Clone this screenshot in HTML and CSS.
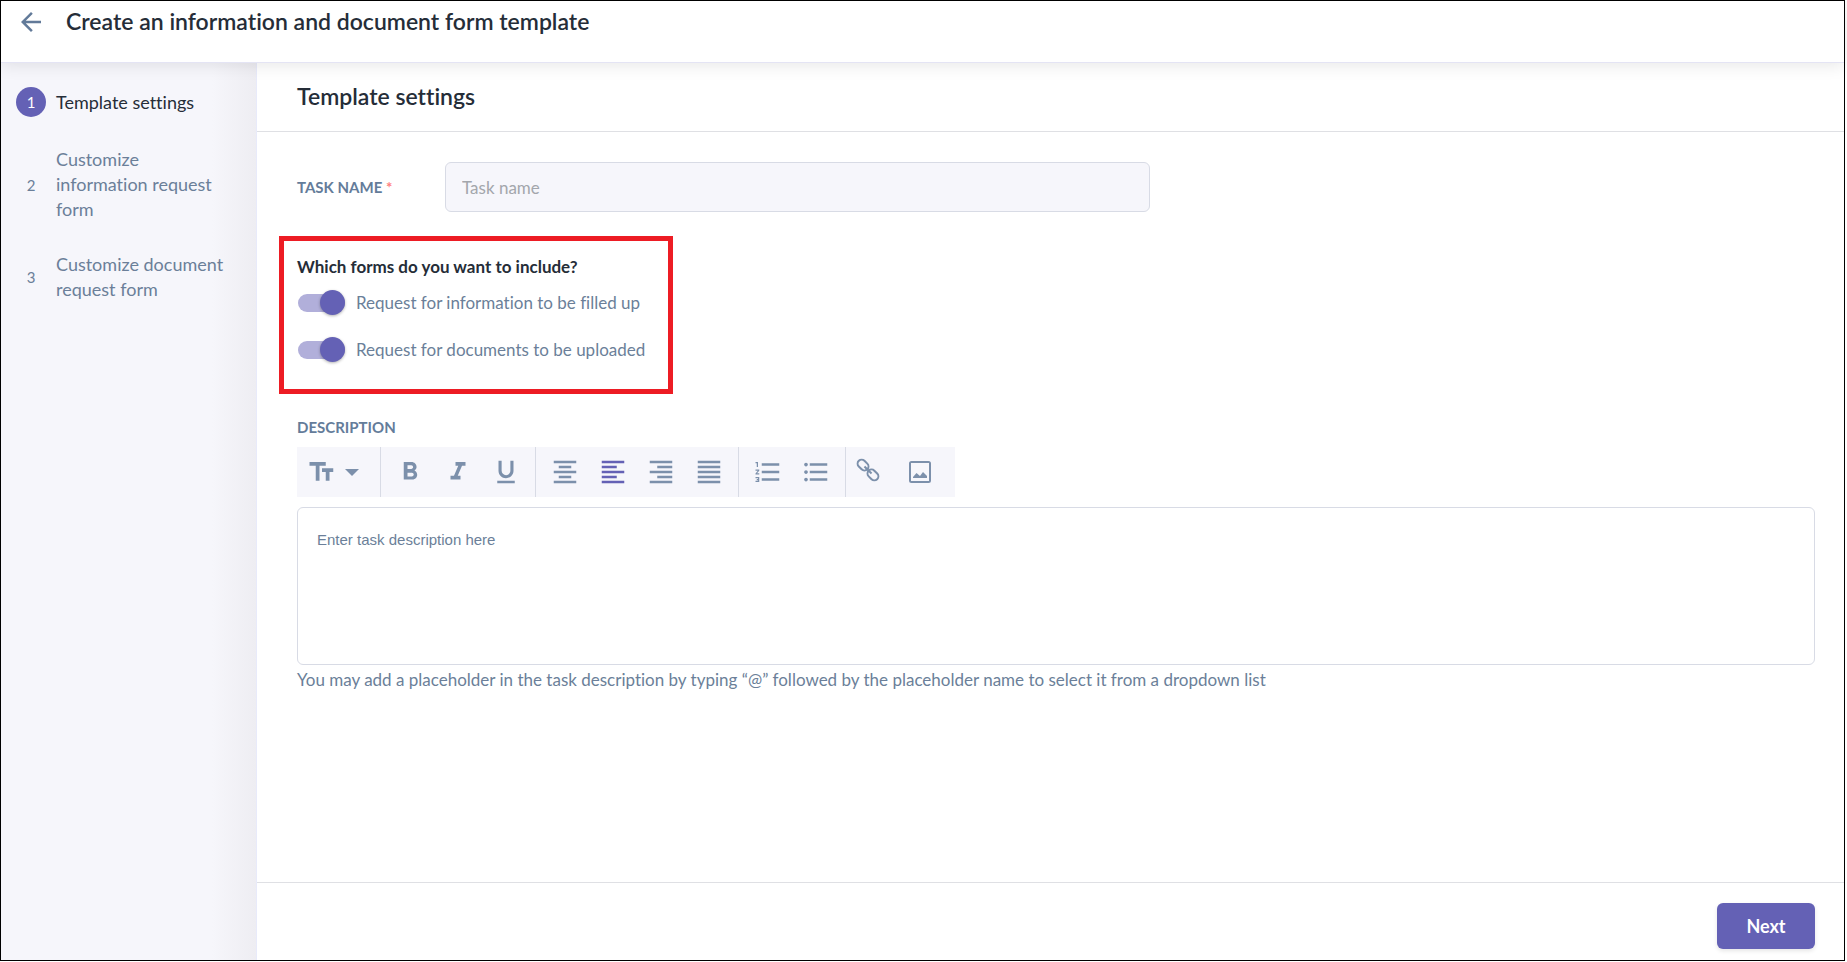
FILE: index.html
```html
<!doctype html>
<html lang="en">
    <head>
        <meta charset="utf-8">
        <title>Create an information and document form template</title>
        <link rel="stylesheet" href="styles.css">
    </head>

    <body>
        <div class="app">
            <header class="topbar">
                <button type="button" class="back" aria-label="Back">
                    <svg viewBox="0 0 24 24"><path d="M20 11H7.83l5.59-5.59L12 4l-8 8 8 8 1.41-1.41L7.83 13H20v-2z"/></svg>
                </button>
                <h1>Create an information and document form template</h1>
            </header>
            <div class="layout">
                <nav class="steps">
                    <ol>
                        <li class="step active"><span class="num">1</span><span>Template settings</span></li>
                        <li class="step"><span class="num">2</span><span>Customize information request form</span></li>
                        <li class="step"><span class="num">3</span><span>Customize document request form</span></li>
                    </ol>
                </nav>
                <main class="panel">
                    <h2>Template settings</h2>
                    <form class="settings" id="settings_form">
                        <div class="field">
                            <label class="caption" for="task_name">TASK NAME <span class="required">*</span></label>
                            <input type="text" id="task_name" name="task_name" placeholder="Task name" required>
                        </div>
                        <fieldset class="forms">
                            <h3>Which forms do you want to include?</h3>
                            <label for="request_info">
                                <input type="checkbox" class="switch" id="request_info" name="request_info" checked>
                                Request for information to be filled up
                            </label>
                            <label for="request_docs">
                                <input type="checkbox" class="switch" id="request_docs" name="request_docs" checked>
                                Request for documents to be uploaded
                            </label>
                        </fieldset>
                        <div class="description">
                            <label class="caption" for="description">DESCRIPTION</label>
                            <div class="toolbar">
                                <div class="group">
                                    <button type="button" class="size" aria-label="Text size">
                                        <svg viewBox="0 0 24 24"><path d="M2 4v3h5v12h3V7h5V4H2zm19 5h-9v3h3v7h3v-7h3V9z"/></svg>
                                        <svg class="caret" viewBox="0 0 14 7"><path d="M0 0l7 7 7-7z"/></svg>
                                    </button>
                                </div>
                                <div class="group">
                                    <button type="button" aria-label="Bold">
                                        <svg viewBox="0 0 24 24"><path d="M15.6 10.79c.97-.67 1.65-1.77 1.65-2.79 0-2.26-1.75-4-4-4H7v14h7.04c2.09 0 3.71-1.7 3.71-3.79 0-1.52-.86-2.82-2.15-3.42zM10 6.5h3c.83 0 1.5.67 1.5 1.5s-.67 1.5-1.5 1.5h-3v-3zm3.5 9H10v-3h3.5c.83 0 1.5.67 1.5 1.5s-.67 1.5-1.5 1.5z"/></svg>
                                    </button>
                                    <button type="button" aria-label="Italic">
                                        <svg viewBox="0 0 24 24"><path d="M10 4v3h2.21l-3.42 8H6v3h8v-3h-2.21l3.42-8H18V4z"/></svg>
                                    </button>
                                    <button type="button" aria-label="Underline">
                                        <svg viewBox="0 0 24 24"><path d="M12 17c3.31 0 6-2.69 6-6V3h-2.5v8c0 1.93-1.57 3.5-3.5 3.5S8.5 12.93 8.5 11V3H6v8c0 3.31 2.69 6 6 6zm-7 2v2h14v-2H5z"/></svg>
                                    </button>
                                </div>
                                <div class="group">
                                    <button type="button" aria-label="Align center">
                                        <svg viewBox="0 0 24 24"><path d="M7 15v2h10v-2H7zm-4 6h18v-2H3v2zm0-8h18v-2H3v2zm4-6v2h10V7H7zM3 3v2h18V3H3z"/></svg>
                                    </button>
                                    <button type="button" class="on" aria-label="Align left">
                                        <svg viewBox="0 0 24 24"><path d="M15 15H3v2h12v-2zm0-8H3v2h12V7zM3 13h18v-2H3v2zm0 8h18v-2H3v2zM3 3v2h18V3H3z"/></svg>
                                    </button>
                                    <button type="button" aria-label="Align right">
                                        <svg viewBox="0 0 24 24"><path d="M3 21h18v-2H3v2zm6-4h12v-2H9v2zm-6-4h18v-2H3v2zm6-4h12V7H9v2zM3 3v2h18V3H3z"/></svg>
                                    </button>
                                    <button type="button" aria-label="Justify">
                                        <svg viewBox="0 0 24 24"><path d="M3 21h18v-2H3v2zm0-4h18v-2H3v2zm0-4h18v-2H3v2zm0-4h18V7H3v2zm0-6v2h18V3H3z"/></svg>
                                    </button>
                                </div>
                                <div class="group">
                                    <button type="button" aria-label="Numbered list">
                                        <svg viewBox="0 0 24 24"><path d="M2 17h2v.5H3v1h1v.5H2v1h3v-4H2v1zm1-9h1V4H2v1h1v3zm-1 3h1.800L2 13.100v.9h3v-1H3.200L5 10.900V10H2v1zm5-6v2h14V5H7zm0 14h14v-2H7v2zm0-6h14v-2H7v2z"/></svg>
                                    </button>
                                    <button type="button" aria-label="Bulleted list">
                                        <svg viewBox="0 0 24 24"><path d="M4 10.500c-.83 0-1.500.67-1.500 1.500s.67 1.500 1.500 1.500 1.500-.67 1.500-1.500-.67-1.500-1.500-1.500zm0-6c-.83 0-1.500.67-1.500 1.500S3.170 7.500 4 7.500 5.500 6.830 5.500 6 4.830 4.500 4 4.500zm0 12c-.83 0-1.500.68-1.500 1.500s.68 1.500 1.500 1.500 1.500-.68 1.500-1.500-.67-1.500-1.500-1.500zM7 19h14v-2H7v2zm0-6h14v-2H7v2zm0-8v2h14V5H7z"/></svg>
                                    </button>
                                </div>
                                <div class="group insert">
                                    <button type="button" class="link" aria-label="Link">
                                        <svg viewBox="0 0 24 24"><g transform="rotate(45 12 10)" fill="none" stroke="currentColor" stroke-width="2"><rect x="-1" y="6" width="12" height="8" rx="4"/><rect x="13" y="6" width="12" height="8" rx="4"/><path d="M7 10h10"/></g></svg>
                                    </button>
                                    <button type="button" aria-label="Image">
                                        <svg viewBox="0 0 24 24"><path d="M20.500 1h-17A2.500 2.500 0 0 0 1 3.500v17A2.500 2.500 0 0 0 3.500 23h17a2.500 2.500 0 0 0 2.500-2.500v-17A2.500 2.500 0 0 0 20.500 1zm.5 20H3V3h18v18zM5 18h14v-2l-4-4-3 4-3.500-3L5 17z"/></svg>
                                    </button>
                                </div>
                            </div>
                            <textarea id="description" name="description" placeholder="Enter task description here"></textarea>
                            <p class="hint">You may add a placeholder in the task description by typing “@” followed by the placeholder name to select it from a dropdown list</p>
                        </div>
                    </form>
                    <footer class="actions">
                        <button type="submit" class="next" form="settings_form">Next</button>
                    </footer>
                </main>
            </div>
        </div>
    </body>
</html>
```
FILE: styles.css
```css
* {
    box-sizing: border-box;
}
body {
    margin: 0;
    padding: 0 2px 1px 0;
    font-family: Lato, 'Liberation Sans', sans-serif;
    font-size: 17px;
    font-variant-ligatures: none;
    line-height: 25px;
    color: #252d38;
    background: #fff;
}
h1,
h2,
h3,
p,
ol {
    margin: 0;
    padding: 0;
}
button {
    margin: 0;
    padding: 0;
    border: none;
    background: none;
    font: inherit;
    color: #7c90ab;
    cursor: pointer;
}
svg {
    display: block;
    width: 30px;
    height: 30px;
    fill: currentColor;
    overflow: visible;
}

.app {
    display: flex;
    flex-direction: column;
    min-height: calc(100vh - 1px);
    border: 1px solid #000;
}
.topbar {
    display: flex;
    gap: 20px;
    height: 62px;
    padding: 5px 15px;
    border-bottom: 1px solid #e4e4f4;
    box-shadow: 0 2px 16px rgba(0, 0, 0, 0.1);
    position: relative;
}
h1,
h2 {
    font-size: 23px;
    font-weight: 600;
    line-height: 31px;
}
.back {
    width: 30px;
    height: 32px;
    color: #627a99;
}

.layout {
    display: flex;
    flex: 1;
}
.steps {
    flex: none;
    width: 256px;
    padding: 24px 32px 24px 15px;
    border-right: 1px solid #e8eafa;
    background: linear-gradient(to left, #eeedf2, #f6f6fb 44px);
    font-size: 18px;
    color: #6b7f99;
}
.steps ol {
    display: grid;
    gap: 30px;
    list-style: none;
}
.step {
    display: grid;
    grid-template-columns: 30px 1fr;
    gap: 10px;
    align-items: center;
}
.num {
    font-size: 15px;
    line-height: 30px;
    text-align: center;
}
.active {
    color: #252d38;
}
.active .num {
    border-radius: 50%;
    background: #6461b5;
    color: #fff;
}

.panel {
    display: flex;
    flex: 1;
    flex-direction: column;
    min-width: 0;
}
h2 {
    padding: 18px 40px 19px;
    border-bottom: 1px solid #dfe0e4;
}
.settings {
    flex: 1;
    padding: 30px 29px 24px 40px;
}
.caption {
    font-size: 15px;
    font-weight: bold;
    color: #647c9a;
}
.required {
    color: #ff8080;
}
.field {
    display: grid;
    grid-template-columns: 148px minmax(0, 705px);
    align-items: center;
}
.field input {
    height: 50px;
    padding: 0 16px;
    border: 1px solid #d8dbe5;
    border-radius: 6px;
    background: #f6f6fb;
    font: inherit;
    color: #252d38;
}
.field input::placeholder {
    color: #a3a6ac;
}
.forms {
    display: grid;
    width: 394px;
    height: 158px;
    margin: 24px 0 21px -18px;
    padding: 13px;
    border: 5px solid #ed1c24;
    align-content: start;
}
.forms h3 {
    font-size: 17px;
    line-height: 25px;
}
.forms label {
    display: flex;
    align-items: center;
    gap: 11px;
    height: 47px;
    padding-left: 1px;
    color: #6b7f99;
}
.switch {
    appearance: none;
    display: flex;
    align-items: center;
    justify-content: flex-end;
    flex: none;
    width: 47px;
    height: 18px;
    margin: 0;
    border-radius: 9px;
    background: #b1afda;
}
.switch::before {
    content: '';
    width: 25px;
    height: 25px;
    border-radius: 50%;
    background: #6461b5;
    box-shadow: 0 1px 3px rgba(0, 0, 0, 0.3);
}
.switch:not(:checked) {
    justify-content: flex-start;
}

.description {
    display: flex;
    flex-direction: column;
}
.toolbar {
    display: flex;
    align-self: flex-start;
    height: 50px;
    margin: 7px 0 10px;
    background: #f6f6fb;
}
.group {
    display: flex;
    padding: 0 5px;
}
.group + .group {
    border-left: 1px solid #d8dbe5;
}
.group button {
    display: flex;
    align-items: center;
    justify-content: center;
    width: 48px;
}
.group .size {
    gap: 8px;
    justify-content: flex-start;
    width: 73px;
    padding-left: 5px;
}
.group .on {
    color: #6461b5;
}
.size .caret {
    width: 14px;
    height: 7px;
}
.insert {
    gap: 6px;
    padding: 0 11px 0 0;
}
.group .link {
    width: 44px;
}
.insert svg {
    width: 24px;
    height: 24px;
}
textarea {
    height: 158px;
    padding: 20px 19px;
    border: 1px solid #d8dbe5;
    border-radius: 6px;
    font: 15px/24px 'Liberation Sans', sans-serif;
    color: #252d38;
    resize: none;
}
textarea::placeholder {
    color: #6b7f99;
}
.hint {
    margin-top: 2px;
    color: #6b7f99;
}

.actions {
    display: flex;
    justify-content: flex-end;
    padding: 20px 29px 11px;
    border-top: 1px solid #dfe0e4;
}
.next {
    width: 98px;
    height: 46px;
    border-radius: 6px;
    background: #6461b5;
    box-shadow: 0 2px 4px rgba(0, 0, 0, 0.1);
    color: #fff;
    font-size: 18px;
    font-weight: bold;
}
```
